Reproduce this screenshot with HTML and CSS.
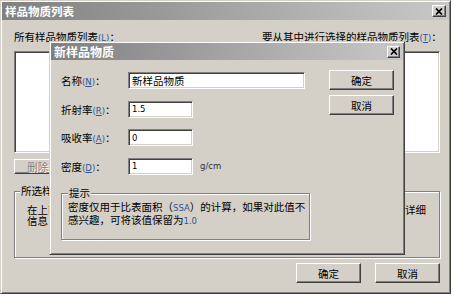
FILE: index.html
```html
<!DOCTYPE html>
<html lang="zh-CN">
<head>
  <meta charset="UTF-8" />
  <title>样品物质列表</title>
  <link rel="stylesheet" href="styles.css">
</head>
<body>
  <div class="win">
    <div class="titlebar">
      <span>样品物质列表</span>
      <button class="close"><svg width="8" height="7" viewBox="0 0 8 7"><path d="M1 0.5 L7 6.5 M7 0.5 L1 6.5" stroke="#000" stroke-width="1.7"/></svg></button>
    </div>

    <div class="main">
      <div class="lists">
        <div class="col col-left">
          <label>所有样品物质列表<span class="key">(<u>L</u>)</span>：</label>
          <div class="listbox"></div>
          <button class="btn btn-del">删除(<u>D</u>)</button>
        </div>
        <div class="col col-right">
          <label>要从其中进行选择的样品物质列表<span class="key">(<u>T</u>)</span>：</label>
          <div class="listbox"></div>
        </div>
      </div>

      <fieldset class="group group-info">
        <legend>所选样品物质信息</legend>
        <p>在上面的列表中选择样品物质，在右侧单击“属性”按钮以查看关于该样品物质的详细<br>信息</p>
      </fieldset>

      <div class="actions">
        <button class="btn">确定</button>
        <button class="btn">取消</button>
      </div>
    </div>

    <!-- 新样品物质 对话框 -->
    <div class="dialog">
      <div class="titlebar">
        <span>新样品物质</span>
        <button class="close"><svg width="8" height="7" viewBox="0 0 8 7"><path d="M1 0.5 L7 6.5 M7 0.5 L1 6.5" stroke="#000" stroke-width="1.7"/></svg></button>
      </div>
      <div class="dialog-body">
        <div class="form">
          <div class="row">
            <label>名称<span class="key">(<u>N</u>)</span>：</label>
            <input class="field field-wide" type="text" value="新样品物质" />
          </div>
          <div class="row">
            <label>折射率<span class="key">(<u>R</u>)</span>：</label>
            <input class="field num" type="text" value="1.5" />
          </div>
          <div class="row">
            <label>吸收率<span class="key">(<u>A</u>)</span>：</label>
            <input class="field num" type="text" value="0" />
          </div>
          <div class="row">
            <label>密度<span class="key">(<u>D</u>)</span>：</label>
            <input class="field num" type="text" value="1" />
            <span class="unit">g/cm</span>
          </div>
          <fieldset class="group hint">
            <legend>提示</legend>
            <p>密度仅用于比表面积（<span class="latin">SSA</span>）的计算，如果对此值不<br>感兴趣，可将该值保留为<span class="latin">1.0</span></p>
          </fieldset>
        </div>
        <div class="side">
          <button class="btn">确定</button>
          <button class="btn">取消</button>
        </div>
      </div>
    </div>
  </div>
</body>
</html>
```

FILE: styles.css
```css
body {
  margin: 0;
  background: #fff;
  font-family: "Noto Sans CJK SC", "DejaVu Sans", sans-serif;
  font-size: 10.5px;
  color: #000;
}
p { margin: 0; }

/* 窗口外框 */
.win {
  position: relative;
  width: 451px;
  height: 294px;
  box-sizing: border-box;
  padding: 1px;
  background: #d4d0c8;
  border: 1px solid;
  border-color: #d4d0c8 #404040 #404040 #d4d0c8;
  box-shadow: inset 1px 1px #fff, inset -1px -1px #808080;
}
.titlebar {
  height: 18px;
  display: flex;
  align-items: center;
  justify-content: space-between;
  padding: 0 3px 0 3px;
  background: linear-gradient(to right, #808080, #c8c8c8);
  color: #fff;
  font-weight: bold;
  font-size: 11.5px;
  line-height: 14px;
}
.close {
  width: 14px;
  height: 12px;
  padding: 0;
  display: flex;
  align-items: center;
  justify-content: center;
  background: #d4d0c8;
  border: 1px solid;
  border-color: #fff #404040 #404040 #fff;
  box-shadow: inset -1px -1px #808080;
}

.main { padding: 0 9px 0 12px; }
.lists {
  display: flex;
  justify-content: space-between;
  margin-top: 10px;
}
.col { display: flex; flex-direction: column; align-items: flex-start; }
.col-left { width: 211px; }
.col-right { width: 178px; }
.col label { line-height: 14px; white-space: nowrap; }
.listbox {
  align-self: stretch;
  height: 102px;
  margin-top: 6px;
  box-sizing: border-box;
  background: #fff;
  border: 1px solid;
  border-color: #808080 #fff #fff #808080;
  box-shadow: inset 1px 1px #404040, inset -1px -1px #d4d0c8;
}
.key {
  font-family: "DejaVu Sans", sans-serif;
  font-size: 8.5px;
  color: #2f5597;
}

.btn {
  width: 65px;
  height: 20px;
  padding: 0;
  font-family: inherit;
  font-size: 10.5px;
  color: #000;
  background: #d4d0c8;
  border: 1px solid;
  border-color: #fff #404040 #404040 #fff;
  box-shadow: inset -1px -1px #808080;
}
.btn-del {
  width: 62px;
  height: 15px;
  margin-top: 6px;
  line-height: 11px;
  color: #808080;
  text-shadow: 1px 1px #fff;
}

/* 分组框 */
.group {
  margin: 0;
  box-sizing: border-box;
  border: 1px solid #808080;
  box-shadow: inset 1px 1px #fff, 1px 1px #fff;
}
.group legend {
  padding: 0 1px;
  line-height: 12px;
  background: #d4d0c8;
}
.group p { line-height: 11px; white-space: nowrap; }
.group-info {
  margin-top: 11px;
  height: 73px;
  padding: 7px 8px 0 12px;
  overflow: hidden;
}
.group-info legend { margin-left: -7px; }

.actions {
  display: flex;
  justify-content: flex-end;
  gap: 14px;
  margin-top: 5px;
}

/* 新样品物质 对话框 */
.dialog {
  position: absolute;
  left: 48px;
  top: 40px;
  width: 356px;
  height: 214px;
  box-sizing: border-box;
  padding: 1px;
  background: #d4d0c8;
  border: 1px solid;
  border-color: #d4d0c8 #404040 #404040 #d4d0c8;
  box-shadow: inset 1px 1px #fff, inset -1px -1px #808080;
}
.dialog .titlebar { height: 17px; font-size: 12px; }
.dialog .close { width: 13px; }
.dialog-body {
  display: flex;
  gap: 22px;
  padding: 10px 9px 0 10px;
}
.form {
  width: 246px;
  display: flex;
  flex-direction: column;
  gap: 11.5px;
  padding-top: 2px;
}
.row {
  display: flex;
  align-items: center;
  height: 17px;
}
.row label { width: 67px; white-space: nowrap; }
.field {
  height: 17px;
  width: 65px;
  box-sizing: border-box;
  padding: 0 3px;
  font-family: inherit;
  font-size: 10.5px;
  color: #000;
  background: #fff;
  border: 1px solid;
  border-color: #808080 #fff #fff #808080;
  box-shadow: inset 1px 1px #404040, inset -1px -1px #d4d0c8;
  outline: none;
}
.field-wide { width: 177px; }
.num { font-family: "DejaVu Sans", sans-serif; font-size: 8.5px; }
.unit {
  margin-left: 7px;
  font-family: "DejaVu Sans", sans-serif;
  font-size: 8.5px;
  color: #333;
}
.hint {
  margin-top: 1px;
  height: 53px;
  padding: 2px 4px 0 6px;
}
.latin {
  font-family: "DejaVu Sans", sans-serif;
  font-size: 8.5px;
  color: #2f5597;
}
.side { display: flex; flex-direction: column; gap: 5px; }
```
